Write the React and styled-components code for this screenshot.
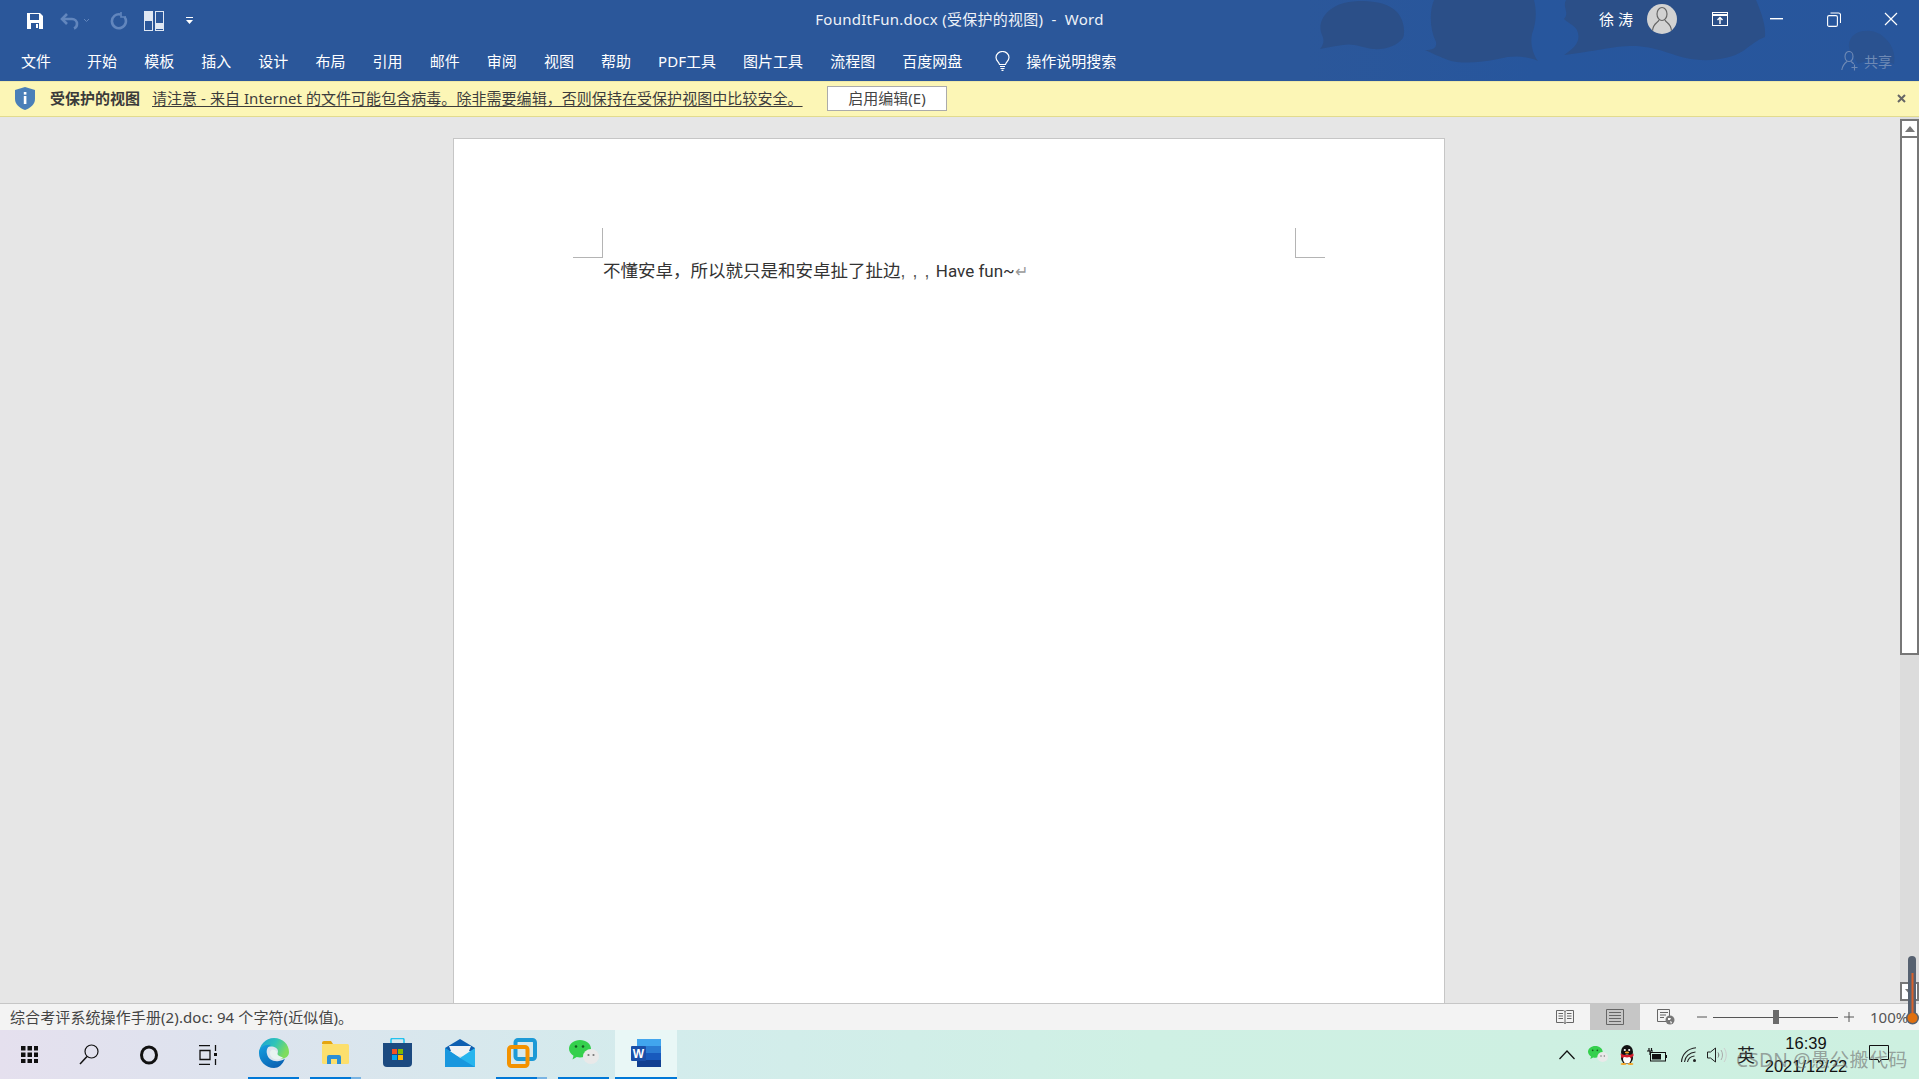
import React from 'react';
import styled, { createGlobalStyle } from 'styled-components';

const Global = createGlobalStyle`
  html, body { margin: 0; padding: 0; width: 100%; height: 100%; overflow: hidden; }
  body { font-family: "Noto Sans", "Noto Sans CJK SC", sans-serif; font-size: 15px; }
  #root { height: 100%; }
  * { box-sizing: border-box; }
`;

const Shell = styled.div`
  position: relative;
  width: 1919px;
  height: 1079px;
  display: flex;
  flex-direction: column;
  overflow: hidden;
  background: #e6e6e6;
`;

/* ---------- ribbon ---------- */
const Ribbon = styled.header`
  position: relative;
  height: 81px;
  flex: none;
  background: linear-gradient(90deg, #2b579a 0%, #2b579a 68%, #27569d 80%, #28569c 100%);
  color: #fff;
  overflow: hidden;
`;
const Blobs = styled.svg`
  position: absolute;
  inset: 0;
  width: 1919px;
  height: 81px;
`;
const TitleRow = styled.div`
  position: relative;
  height: 41px;
  display: grid;
  grid-template-columns: 1fr auto 1fr;
  align-items: center;
`;
const Qat = styled.div`
  display: flex;
  align-items: center;
  height: 41px;
  padding-left: 26px;
`;
const QatIcon = styled.span`
  display: flex;
  align-items: center;
  justify-content: center;
  margin-left: ${p => p.$ml || 0}px;
`;
const DocTitle = styled.div`
  font-size: 15px;
  line-height: 20px;
  white-space: pre;
  color: #eef2f8;
  margin-top: -3px;
  letter-spacing: 0.25px;
`;
const WinArea = styled.div`
  display: flex;
  justify-content: flex-end;
  align-items: center;
  height: 41px;
  margin-top: -3px;
`;
const UserName = styled.span`
  font-size: 15px;
  letter-spacing: 4px;
  margin-right: 10px;
  margin-top: -2px;
`;
const Avatar = styled.span`
  width: 30px;
  height: 30px;
  border-radius: 50%;
  background: #d2d2d2;
  display: flex;
  align-items: center;
  justify-content: center;
  margin-right: 14px;
  overflow: hidden;
`;
const WinBtn = styled.span`
  width: 57px;
  height: 38px;
  display: flex;
  align-items: center;
  justify-content: center;
`;
const TabRow = styled.nav`
  position: relative;
  height: 40px;
  display: flex;
  align-items: center;
  padding-left: 21px;
`;
const Tab = styled.span`
  font-size: 15px;
  line-height: 20px;
  margin-left: ${p => p.$ml ?? 27.1}px;
  white-space: nowrap;
  color: #fff;
`;
const Bulb = styled.span`
  display: flex;
  margin-left: 33px;
  margin-right: 16px;
`;
const Share = styled.span`
  margin-left: auto;
  margin-right: 27px;
  display: flex;
  align-items: center;
  gap: 5px;
  font-size: 14px;
  color: #6f8ab5;
`;

/* ---------- protected view bar ---------- */
const Notice = styled.div`
  height: 36px;
  flex: none;
  display: flex;
  align-items: center;
  padding: 0 0 2px 15px;
  background: #fcf6b6;
  border-top: 1px solid #efe9a8;
  border-bottom: 1px solid #e2db8e;
  color: #333;
`;
const NoticeTitle = styled.strong`
  font-size: 15px;
  font-weight: 700;
  margin: -1px 0 0 15px;
  width: 102px;
  white-space: nowrap;
  color: #3a3a3a;
`;
const NoticeLink = styled.span`
  font-size: 15px;
  width: 650px;
  margin-top: -1px;
  white-space: nowrap;
  text-decoration: underline;
  text-underline-offset: 2px;
  color: #3c3c3c;
  letter-spacing: 0.05px;
`;
const EnableBtn = styled.span`
  margin-left: 25px;
  width: 120px;
  height: 25px;
  padding-bottom: 2px;
  display: flex;
  align-items: center;
  justify-content: center;
  background: #fff;
  border: 1px solid #ababab;
  font-size: 15px;
  color: #444;
`;
const NoticeClose = styled.span`
  margin-left: auto;
  margin-right: 13px;
  display: flex;
`;

/* ---------- document area ---------- */
const Workspace = styled.main`
  flex: 1;
  min-height: 0;
  display: flex;
  background: #e6e6e6;
`;
const Canvas = styled.div`
  flex: 1;
  min-width: 0;
  padding: 21px 0 0 453px;
`;
const Sheet = styled.article`
  width: 992px;
  height: 100%;
  background: #fff;
  border: 1px solid #c6c6c6;
  border-bottom: none;
  padding: 89px 119px 0 119px;
`;
const CropRow = styled.div`
  display: flex;
  justify-content: space-between;
  height: 30px;
`;
const Crop = styled.span`
  width: 30px;
  height: 30px;
  border-bottom: 1px solid #b4b4b4;
  ${p => p.$side === 'left' ? 'border-right: 1px solid #b4b4b4;' : 'border-left: 1px solid #b4b4b4;'}
`;
const BodyText = styled.p`
  margin: 0 0 0 30px;
  font-size: 17.5px;
  line-height: 24px;
  color: #333;
  white-space: pre;
`;
const ThinCommas = styled.span`
  letter-spacing: 7.1px;
  font-family: "Liberation Sans", sans-serif;
  margin-right: -0.6px;
  color: #555;
`;
const Latin = styled.span`
  font-family: "Roboto", sans-serif;
  font-size: 17px;
`;
const Pilcrow = styled.span`
  color: #9a9a9a;
  font-size: 16px;
  line-height: 16px;
`;
const Scrollbar = styled.aside`
  width: 19px;
  flex: none;
  padding-top: 2px;
  background: #dcdcdc;
  display: flex;
  flex-direction: column;
`;
const ScrollBtn = styled.span`
  height: 19px;
  flex: none;
  background: #fff;
  border: 2px solid #777;
  display: flex;
  align-items: center;
  justify-content: center;
  margin-top: ${p => p.$auto ? 'auto' : '0'};
  margin-bottom: ${p => p.$auto ? '2px' : '0'};
`;
const Thumb = styled.span`
  height: 517px;
  flex: none;
  background: #fff;
  border: 2px solid #777;
  border-top-width: 0;
`;

/* ---------- status bar ---------- */
const Status = styled.footer`
  height: 27px;
  flex: none;
  display: flex;
  align-items: center;
  padding-left: 10px;
  background: #f3f3f3;
  border-top: 1px solid #c6c6c6;
  color: #444;
`;
const StatusText = styled.span`
  font-size: 15px;
  line-height: 20px;
  letter-spacing: 0.1px;
  white-space: nowrap;
`;
const StatusRight = styled.div`
  margin-left: auto;
  display: flex;
  align-items: center;
  height: 26px;
`;
const ViewBtn = styled.span`
  width: ${p => p.$w}px;
  height: 26px;
  display: flex;
  align-items: center;
  justify-content: center;
  background: ${p => p.$active ? '#c6c6c6' : 'transparent'};
`;
const ZoomOut = styled.span`
  width: 16px;
  display: flex;
  justify-content: flex-end;
`;
const Slider = styled.span`
  position: relative;
  width: 125px;
  height: 1px;
  margin: 0 6px 0 6px;
  background: #555;
`;
const SliderThumb = styled.span`
  position: absolute;
  left: 60px;
  top: -7px;
  width: 6px;
  height: 14px;
  background: #6a6a6a;
`;
const Zoom = styled.span`
  font-size: 15px;
  margin-left: 16px;
  width: 49px;
  white-space: nowrap;
  color: #555;
`;

/* ---------- taskbar ---------- */
const Taskbar = styled.div`
  height: 49px;
  flex: none;
  display: flex;
  align-items: stretch;
  background: linear-gradient(90deg, #e5e0ee 0%, #dde3ee 12%, #d3ecec 35%, #cff0e4 60%, #cdf0e0 100%);
`;
const SysCell = styled.span`
  width: ${p => p.$w || 60}px;
  display: flex;
  align-items: center;
  justify-content: center;
`;
const AppList = styled.div`
  display: flex;
  gap: 11px;
  margin-left: 9px;
`;
const AppCell = styled.span`
  position: relative;
  width: ${p => p.$w || 51}px;
  margin-left: ${p => p.$ml || 0}px;
  display: flex;
  align-items: center;
  justify-content: center;
  padding-bottom: 2px;
  background: ${p => p.$active ? '#e9f7f6' : 'transparent'};
  border-bottom: 2px solid ${p => p.$on ? '#0078d7' : 'transparent'};
`;
const StackEnd = styled.span`
  position: absolute;
  right: 0;
  bottom: -2px;
  width: 10px;
  height: 2px;
  background: #79b4e3;
`;
const Tray = styled.div`
  margin-left: auto;
  display: flex;
  align-items: center;
  height: 49px;
  padding-right: 30px;
`;
const TrayItem = styled.span`
  display: flex;
  align-items: center;
  justify-content: center;
  margin-left: ${p => p.$ml || 0}px;
`;
const ImeLabel = styled.span`
  font-size: 18px;
  line-height: 20px;
  color: #222;
  margin-left: 10px;
`;
const Clock = styled.span`
  width: 84px;
  margin-left: 9px;
  display: flex;
  flex-direction: column;
  align-items: center;
  color: #111;
  font-family: "Liberation Sans", sans-serif;
  font-size: 16.5px;
  line-height: 23px;
`;

/* ---------- overlays ---------- */
const Watermark = styled.span`
  position: absolute;
  left: 1736px;
  top: 1046px;
  font-size: 19.2px;
  line-height: 28px;
  letter-spacing: 0.2px;
  color: rgba(110, 110, 110, 0.62);
  white-space: nowrap;
`;
const Gauge = styled.svg`
  position: absolute;
  left: 1905px;
  top: 955px;
`;

/* ---------- drawings ---------- */
const dimBlue = '#6286bd';
const SaveIcon = () => (
  <svg width="18" height="18" viewBox="0 0 18 18"><path d="M1 1h13l3 3v13H1z" fill="#fff"/><rect x="4" y="2" width="9" height="6" fill="#2b579a"/><rect x="5" y="11" width="8" height="6" fill="#2b579a"/><rect x="10" y="12" width="2" height="4" fill="#fff"/></svg>
);
const UndoIcon = () => (
  <svg width="20" height="18" viewBox="0 0 20 18" fill="none" stroke={dimBlue} strokeWidth="2.6"><path d="M7 2 2 7l5 5"/><path d="M2 7h10a5 5 0 0 1 5 5 5 5 0 0 1-3 4.500"/></svg>
);
const Caret = ({ c = dimBlue }) => (
  <svg width="7" height="5" viewBox="0 0 7 5" fill="none" stroke={c}><path d="m1 1 2.500 2.500L6 1"/></svg>
);
const RedoIcon = () => (
  <svg width="18" height="20" viewBox="0 0 18 20" fill="none" stroke={dimBlue} strokeWidth="2.6"><path d="M10.500 3.400a7 7 0 1 0 4 2.600"/><path d="M11 1v5h5" strokeWidth="1.600"/></svg>
);
const LayoutIcon = () => (
  <svg width="20" height="20" viewBox="0 0 20 20" fill="none" stroke="#dfe7f3"><rect x="0.500" y="0.500" width="8" height="19"/><rect x="11.500" y="0.500" width="8" height="19"/><rect x="1" y="1" width="7" height="9" fill="#dfe7f3" stroke="none"/><rect x="12" y="12" width="7" height="6" fill="#dfe7f3" stroke="none"/></svg>
);
const CustomizeIcon = () => (
  <svg width="7" height="8" viewBox="0 0 7 8" fill="#fff"><rect y="0" width="7" height="1"/><path d="M0 3h7L3.500 7z"/></svg>
);
const AvatarIcon = () => (
  <svg width="22" height="26" viewBox="0 0 22 26" fill="none" stroke="#666" strokeWidth="1.200"><ellipse cx="11" cy="8" rx="5" ry="6.500"/><path d="M8 14c-1 3-6 3-6.500 11M14 14c1 3 6 3 6.500 11"/></svg>
);
const DisplayIcon = () => (
  <svg width="16" height="14" viewBox="0 0 16 14" fill="none" stroke="#fff"><rect x="0.500" y="0.500" width="15" height="13"/><path d="M1 3h14" strokeWidth="2"/><path d="M8 12V6M5.500 8 8 5.500 10.500 8" strokeWidth="1.400"/></svg>
);
const MinIcon = () => <svg width="13" height="2"><rect width="13" height="1.400" fill="#fff"/></svg>;
const RestoreIcon = () => (
  <svg width="14" height="15" viewBox="0 0 14 15" fill="none" stroke="#fff" strokeWidth="1.100"><rect x="0.600" y="3.600" width="9.800" height="10.800" rx="1.500"/><path d="M3.500 1 h8 a2 2 0 0 1 2 2v8"/></svg>
);
const CloseIcon = () => (
  <svg width="14" height="14" viewBox="0 0 14 14" stroke="#fff" strokeWidth="1.200"><path d="m1 1 12 12M13 1 1 13"/></svg>
);
const BulbIcon = () => (
  <svg width="15" height="20" viewBox="0 0 15 20" fill="none" stroke="#fff" strokeWidth="1.200"><path d="M4.500 13.500C4 11 1 9.500 1 6.500a6.500 6 0 0 1 13 0c0 3-3 4.500-3.500 7z"/><path d="M5 15.500h5M5.500 17.500h4M6.500 19.300h2"/></svg>
);
const ShareIcon = () => (
  <svg width="18" height="20" viewBox="0 0 18 20" fill="none" stroke="#6f8ab5" strokeWidth="1.100"><ellipse cx="8" cy="5.500" rx="4" ry="5"/><path d="M6 10.500C4 12 1.500 14 .8 19M10 10.500c1 .7 2 1.400 2.700 2.400M13.500 13.500v6M10.500 16.500h6"/></svg>
);
const ShieldIcon = () => (
  <svg width="20" height="23" viewBox="0 0 20 23"><path d="M10 0 20 3v9c0 5.500-4.500 9-10 11C4.500 21 0 17.500 0 12V3z" fill="#4a7fb8"/><rect x="8.800" y="9" width="2.600" height="8" fill="#fff"/><rect x="8.800" y="5" width="2.600" height="2.600" fill="#fff"/></svg>
);
const SmallX = () => (
  <svg width="9" height="9" viewBox="0 0 9 9" stroke="#666" strokeWidth="2"><path d="m1 1 7 7M8 1 1 8"/></svg>
);
const Tri = ({ down }) => (
  <svg width="10" height="6" viewBox="0 0 10 6" fill="#777"><path d={down ? 'M0 0h10L5 6z' : 'M0 6h10L5 0z'}/></svg>
);
const ReadIcon = () => (
  <svg width="18" height="15" viewBox="0 0 18 15" fill="none" stroke="#666"><path d="M.5.500h7l1.500 1 1.500-1h7v12h-7l-1.500 1-1.500-1h-7zM9 1.500v12M2.500 3.500h4.500M2.500 6h4.500M2.500 8.500h4.500M11 3.500h4.500M11 6h4.500M11 8.500h4.500"/></svg>
);
const PrintIcon = () => (
  <svg width="18" height="16" viewBox="0 0 18 16" fill="none" stroke="#666"><path d="M.5.500h17v15H.5zM3 3.500h12M3 6.500h12M3 9.500h12M3 12.500h12"/></svg>
);
const WebIcon = () => (
  <svg width="18" height="16" viewBox="0 0 18 16"><path d="M.5.500h12v12H.5zM3 3.500h8M3 6h6M3 8.500h4" fill="none" stroke="#666"/><circle cx="13" cy="11" r="4.500" fill="#777"/><path d="M11 9h3l-1 2h-2zM13 12l2 1-1 2z" fill="#fff"/></svg>
);
const ZoomSign = ({ plus }) => (
  <svg width="10" height="10" viewBox="0 0 10 10" stroke="#555"><path d="M0 5h10"/>{plus && <path d="M5 0v10"/>}</svg>
);
const StartIcon = () => (
  <svg width="17" height="17" viewBox="0 0 17 17" fill="#111">
    {[0, 6.500, 13].flatMap(y => [0, 6.500, 13].map(x => <rect key={`${x}-${y}`} x={x} y={y} width="4.500" height="4.500"/>))}
  </svg>
);
const SearchIcon = () => (
  <svg width="20" height="21" viewBox="0 0 20 21" fill="none" stroke="#111" strokeWidth="1.200"><circle cx="12.500" cy="7.500" r="6.500"/><path d="m8 12.500-7 7.500" strokeWidth="1.500"/></svg>
);
const CortanaIcon = () => (
  <svg width="20" height="20" viewBox="0 0 20 20" fill="none" stroke="#111" strokeWidth="3"><ellipse cx="10" cy="10" rx="7.500" ry="8"/></svg>
);
const TaskViewIcon = () => (
  <svg width="21" height="20" viewBox="0 0 21 20" fill="none" stroke="#111" strokeWidth="1.300"><path d="M0 .7h11M0 19.300h11M1 5.500h10v9H1zM16.500 0v6M16.500 14v6"/><rect x="15" y="8" width="3" height="3" fill="#111" stroke="none"/></svg>
);
const EdgeIcon = () => (
  <svg width="30" height="30" viewBox="0 0 30 30">
    <defs>
      <linearGradient id="eg1" x1="0" y1="0" x2="1" y2="0.4"><stop offset="0" stopColor="#1a9ed8"/><stop offset="0.55" stopColor="#2fc4b8"/><stop offset="1" stopColor="#7fdc5e"/></linearGradient>
      <linearGradient id="eg2" x1="0" y1="0" x2="0.6" y2="1"><stop offset="0" stopColor="#16a0e0"/><stop offset="1" stopColor="#0a63b4"/></linearGradient>
    </defs>
    <path d="M15 0C24 0 30 6.500 30 14c0 4-3 6.500-7 6.500-3.500 0-5.500-1.500-5.500-3 0-1 1.500-1.500 1.500-4C19 10 15.500 8.500 12 8.500 7 8.500 2.500 11.500 0 16 0 7 6.500 0 15 0z" fill="url(#eg1)"/>
    <path d="M0 15C0 9 6 6 12 7c-3.500 1.500-5 5-4 9 1 5 6 8 12 7 3-.5 5-1.500 6-2.500C23.500 27 19.500 30 15 30 6.500 30 0 23 0 15z" fill="url(#eg2)"/>
    <path d="M12.500 12c3-1 5.500 1 5.500 2.500 0 2 2 4.500 6 4.500-2 3-8 3.500-11 .5-2.500-2.500-2.500-6-.5-7.500z" fill="#e8f4f2"/>
  </svg>
);
const FolderIcon = () => (
  <svg width="27" height="24" viewBox="0 0 27 24">
    <path d="M0 2a2 2 0 0 1 2-2h7l2 3H0z" fill="#e5a50f"/>
    <rect y="3" width="27" height="20" rx="1.500" fill="#fcdf6d"/>
    <path d="M5 23v-7a2 2 0 0 1 2-2h10a2 2 0 0 1 2 2v7h-4v-5H9v5z" fill="#2a8fd6"/>
  </svg>
);
const StoreIcon = () => (
  <svg width="29" height="29" viewBox="0 0 29 29">
    <path d="M8 5V2a1.500 1.500 0 0 1 1.500-1.500h10A1.500 1.500 0 0 1 21 2v3" fill="none" stroke="#22c2ee" strokeWidth="1.600"/>
    <path d="M0 5h29v20a4 4 0 0 1-4 4H4a4 4 0 0 1-4-4z" fill="#1c4a80"/>
    <rect x="9" y="11" width="5" height="5" fill="#f25022"/><rect x="15" y="11" width="5" height="5" fill="#7fba00"/>
    <rect x="9" y="17" width="5" height="5" fill="#00a4ef"/><rect x="15" y="17" width="5" height="5" fill="#ffb900"/>
  </svg>
);
const MailIcon = () => (
  <svg width="30" height="28" viewBox="0 0 30 28">
    <path d="M15 0 30 9v3H0V9z" fill="#0f5fb0"/>
    <path d="M4 7h22l-4 10H8z" fill="#f0f2f4"/>
    <path d="M0 9l15 10L30 9v19H0z" fill="#28b5ee"/>
    <path d="M0 28V9l15 10 15 9z" fill="#1997de"/>
  </svg>
);
const VmIcon = () => (
  <svg width="30" height="30" viewBox="0 0 30 30" fill="none">
    <rect x="8.500" y="2" width="19.500" height="19" rx="2.500" stroke="#1d9ad6" strokeWidth="4"/>
    <rect x="2" y="9" width="18.500" height="19" rx="2.500" stroke="#f39200" strokeWidth="4"/>
  </svg>
);
const ChatIcon = ({ w = 30 }) => (
  <svg width={w} height={w * 25 / 30} viewBox="0 0 30 25">
    <path d="M11 0c6 0 11 3.700 11 8.800S17 17.500 11 17.500c-1.200 0-2.300-.1-3.300-.4L3.500 19.500l1-3.800C1.700 14 0 11.500 0 8.800 0 3.700 5 0 11 0z" fill="#35d04d"/>
    <circle cx="7" cy="6.500" r="1.300" fill="#155d20"/><circle cx="14" cy="6.500" r="1.300" fill="#155d20"/>
    <ellipse cx="22" cy="16.500" rx="8" ry="7.500" fill="#e9e9e9"/>
    <circle cx="19.500" cy="15" r="1.100" fill="#777"/><circle cx="24.500" cy="15" r="1.100" fill="#777"/>
  </svg>
);
const WordIcon = () => (
  <svg width="30" height="28" viewBox="0 0 30 28">
    <rect x="6" y="0" width="24" height="7" fill="#41a5ee"/>
    <rect x="6" y="7" width="24" height="7" fill="#2b7cd3"/>
    <rect x="6" y="14" width="24" height="7" fill="#185abd"/>
    <rect x="6" y="21" width="24" height="7" fill="#103f91"/>
    <rect x="0" y="7" width="15" height="15" rx="1" fill="#1a4fa8"/>
    <text x="7.500" y="19" textAnchor="middle" fontFamily="Liberation Sans, sans-serif" fontWeight="700" fontSize="12" fill="#fff">W</text>
  </svg>
);
const Chevron = () => (
  <svg width="16" height="10" viewBox="0 0 16 10" fill="none" stroke="#111" strokeWidth="1.200"><path d="m.5 9 7.500-8 7.500 8"/></svg>
);
const QqIcon = () => (
  <svg width="16" height="20" viewBox="0 0 16 20">
    <ellipse cx="8" cy="7" rx="6" ry="7" fill="#111"/>
    <ellipse cx="8" cy="13" rx="6" ry="6" fill="#111"/>
    <ellipse cx="8" cy="14" rx="4" ry="4.500" fill="#fff"/>
    <path d="M1.500 8.500c4 2 9 2 13 0v2.500l-2 1v2l-2-2c-2 .5-3 .5-5 0l-3 1z" fill="#d81e2c"/>
    <circle cx="5.800" cy="5" r="1.100" fill="#fff"/><circle cx="10.200" cy="5" r="1.100" fill="#fff"/>
    <ellipse cx="8" cy="7.500" rx="2.200" ry="1" fill="#f5a623"/>
    <ellipse cx="4.500" cy="19" rx="3" ry="1" fill="#f5a623"/><ellipse cx="11.500" cy="19" rx="3" ry="1" fill="#f5a623"/>
  </svg>
);
const BatteryIcon = () => (
  <svg width="20" height="14" viewBox="0 0 20 14" fill="none" stroke="#111"><path d="M0 3h6M2 0v3M4.500 0v3M3 3.500V7" strokeWidth="1.200"/><rect x="3.500" y="4.500" width="15" height="8.500"/><rect x="5" y="6" width="9" height="5.500" fill="#111" stroke="none"/><rect x="18.500" y="7" width="1.500" height="3" fill="#111" stroke="none"/></svg>
);
const WifiIcon = () => (
  <svg width="16" height="16" viewBox="0 0 16 16" fill="none" stroke="#222"><path d="M.5 15C1 7 7 1.500 15 .8M3.500 15c.5-5.500 5-9.500 11-10M6.500 15c.5-3 3-5.500 7-6" strokeWidth="1.100"/><circle cx="13.500" cy="13.500" r="1.500" fill="#222" stroke="none"/></svg>
);
const VolumeIcon = () => (
  <svg width="20" height="16" viewBox="0 0 20 16" fill="none" stroke="#222"><path d="M.5 5h3l5-4v14l-5-4h-3z"/><path d="M11 5.500c1 1.500 1 3.500 0 5" stroke="#777"/><path d="M14 3c2 3 2 7 0 10" stroke="#aaa"/><path d="M17 1c3 4 3 10 0 14" stroke="#ccc"/></svg>
);
const NotifyIcon = () => (
  <svg width="20" height="19" viewBox="0 0 20 19" fill="none" stroke="#111"><path d="M.5.500h19v14h-7l-2.500 3-1-3H.5z"/></svg>
);

const BlobArt = () => (
  <Blobs viewBox="0 0 1919 81" aria-hidden="true">
    <g fill="#2b4f88">
      <path d="M1344 3c20-4 42-2 53 9 8 9 8 22 6 26-6 8-18 12-30 11-12-2-20-6-30-4-10 1-16 3-23 4 3-4 5-8 2-14-6-14 6-28 22-32z"/>
      <path d="M1434 0h100c3 12 2 24-2 34-2 10 1 20 6 27-12-5-24-6-40-2-18 4-38 5-50 1-8-3-14-6-23-10 8 0 12-2 11-8-6-12-7-30-2-42z"/>
      <path d="M1566 0h190c6 14 10 26 9 37-8 3-14 8-22 14-12 8-34 11-52 8-22-4-36-14-62-13-20 1-32 5-65 9 12-8 16-14 14-22-2-8-8-8-14-14 6-6-2-12 2-19z"/>
    </g>
    <path d="M1850 40c4-10 20-12 30-6 12 8 16 20 14 30-14-6-28-4-36 0-4-8-12-14-8-24z" fill="#2a5290"/>
  </Blobs>
);

const tabs = ['模板', '插入', '设计', '布局', '引用', '邮件', '审阅', '视图', '帮助', 'PDF工具', '图片工具', '流程图', '百度网盘'];

export default function App() {
  return (
    <Shell>
      <Global />
      <Ribbon>
        <BlobArt />
        <TitleRow>
          <Qat>
            <QatIcon><SaveIcon /></QatIcon>
            <QatIcon $ml={16}><UndoIcon /></QatIcon>
            <QatIcon $ml={3}><Caret /></QatIcon>
            <QatIcon $ml={20}><RedoIcon /></QatIcon>
            <QatIcon $ml={16}><LayoutIcon /></QatIcon>
            <QatIcon $ml={22}><CustomizeIcon /></QatIcon>
          </Qat>
          <DocTitle>FoundItFun.docx (受保护的视图)  -  Word</DocTitle>
          <WinArea>
            <UserName>徐涛</UserName>
            <Avatar><AvatarIcon /></Avatar>
            <WinBtn><DisplayIcon /></WinBtn>
            <WinBtn><MinIcon /></WinBtn>
            <WinBtn><RestoreIcon /></WinBtn>
            <WinBtn><CloseIcon /></WinBtn>
          </WinArea>
        </TitleRow>
        <TabRow>
          <Tab $ml={0}>文件</Tab>
          <Tab $ml={36}>开始</Tab>
          {tabs.map(t => <Tab key={t}>{t}</Tab>)}
          <Bulb><BulbIcon /></Bulb>
          <Tab $ml={0}>操作说明搜索</Tab>
          <Share><ShareIcon />共享</Share>
        </TabRow>
      </Ribbon>

      <Notice>
        <ShieldIcon />
        <NoticeTitle>受保护的视图</NoticeTitle>
        <NoticeLink>请注意 - 来自 Internet 的文件可能包含病毒。除非需要编辑，否则保持在受保护视图中比较安全。</NoticeLink>
        <EnableBtn>启用编辑(E)</EnableBtn>
        <NoticeClose><SmallX /></NoticeClose>
      </Notice>

      <Workspace>
        <Canvas>
          <Sheet>
            <CropRow>
              <Crop $side="left" />
              <Crop $side="right" />
            </CropRow>
            <BodyText>不懂安卓，所以就只是和安卓扯了扯边<ThinCommas>,,,</ThinCommas><Latin>Have fun~</Latin><Pilcrow>↵</Pilcrow></BodyText>
          </Sheet>
        </Canvas>
        <Scrollbar>
          <ScrollBtn><Tri /></ScrollBtn>
          <Thumb />
          <ScrollBtn $auto><Tri down /></ScrollBtn>
        </Scrollbar>
      </Workspace>

      <Status>
        <StatusText>综合考评系统操作手册(2).doc: 94 个字符(近似值)。</StatusText>
        <StatusRight>
          <ViewBtn $w={50}><ReadIcon /></ViewBtn>
          <ViewBtn $w={50} $active><PrintIcon /></ViewBtn>
          <ViewBtn $w={51}><WebIcon /></ViewBtn>
          <ZoomOut><ZoomSign /></ZoomOut>
          <Slider><SliderThumb /></Slider>
          <ZoomSign plus />
          <Zoom>100%</Zoom>
        </StatusRight>
      </Status>

      <Taskbar>
        <SysCell $w={59}><StartIcon /></SysCell>
        <SysCell><SearchIcon /></SysCell>
        <SysCell><CortanaIcon /></SysCell>
        <SysCell><TaskViewIcon /></SysCell>
        <AppList>
          <AppCell $on><EdgeIcon /></AppCell>
          <AppCell $on><FolderIcon /><StackEnd /></AppCell>
          <AppCell><StoreIcon /></AppCell>
          <AppCell><MailIcon /></AppCell>
          <AppCell $on><VmIcon /><StackEnd /></AppCell>
          <AppCell $on><ChatIcon /></AppCell>
          <AppCell $on $active $w={62} $ml={-5}><WordIcon /></AppCell>
        </AppList>
        <Tray>
          <TrayItem><Chevron /></TrayItem>
          <TrayItem $ml={13}><ChatIcon w={20} /></TrayItem>
          <TrayItem $ml={11}><QqIcon /></TrayItem>
          <TrayItem $ml={12}><BatteryIcon /></TrayItem>
          <TrayItem $ml={14}><WifiIcon /></TrayItem>
          <TrayItem $ml={10}><VolumeIcon /></TrayItem>
          <ImeLabel>英</ImeLabel>
          <Clock><span>16:39</span><span>2021/12/22</span></Clock>
          <TrayItem $ml={21}><NotifyIcon /></TrayItem>
        </Tray>
      </Taskbar>

      <Watermark>CSDN @愚公搬代码</Watermark>
      <Gauge width="14" height="74" viewBox="0 0 14 74">
        <rect x="3" y="1" width="8" height="64" rx="4" fill="#566170"/>
        <circle cx="7.500" cy="63" r="6.500" fill="#566170"/>
        <rect x="6.500" y="18" width="2" height="44" fill="#d9622b"/>
        <circle cx="7.500" cy="63" r="5" fill="#e07010"/>
      </Gauge>
    </Shell>
  );
}
